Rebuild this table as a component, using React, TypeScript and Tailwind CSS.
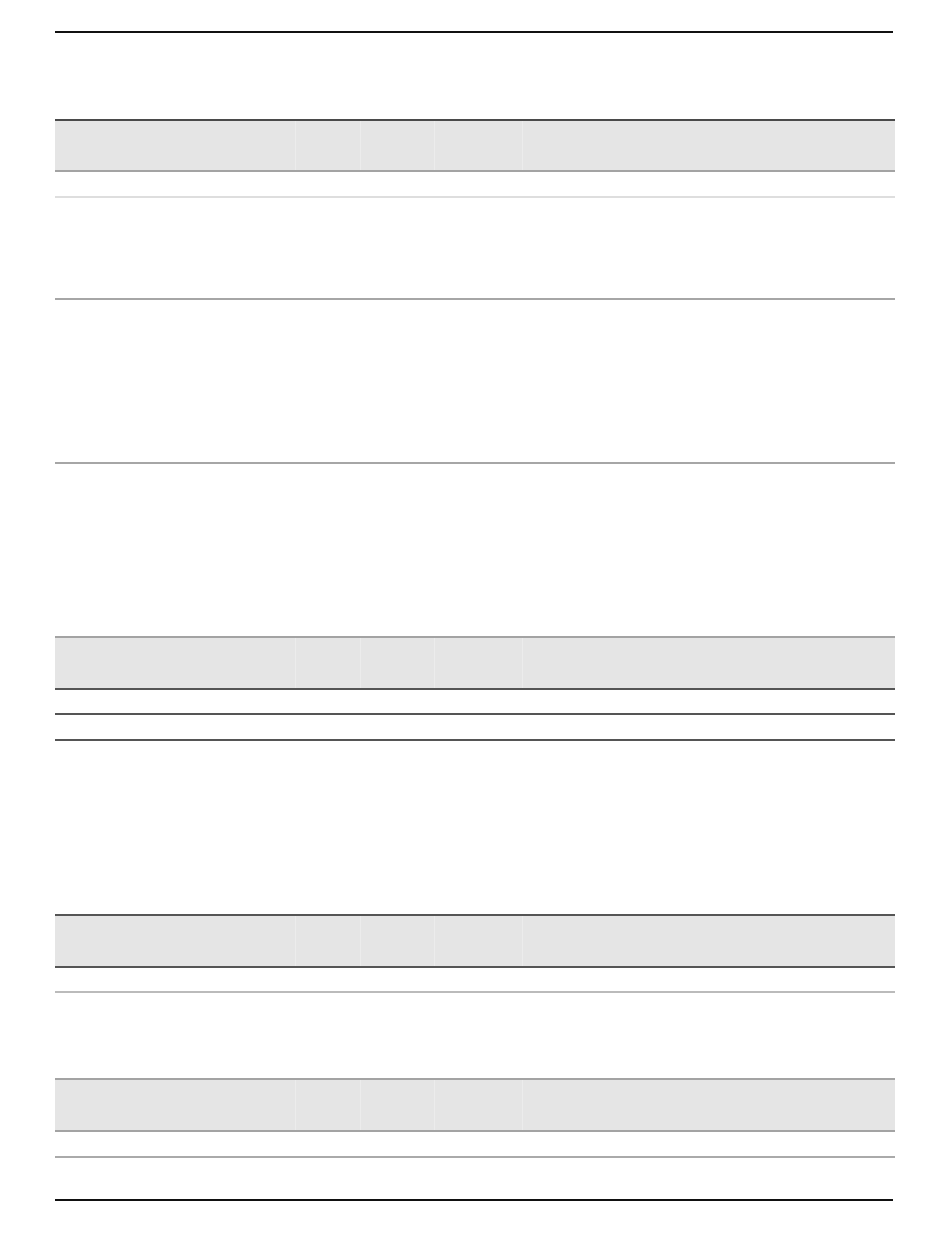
import { FC } from "react";

type Row = { h: string; line: string };

type TableProps = {
  mt: string;
  head: string;
  top: string;
  bottom: string;
  rows: Row[];
};

// empty header with column dividers, then blank body rows
const BlankTable: FC<TableProps> = ({ mt, head, top, bottom, rows }) => {
  return (
    <div className={`w-[840px] ${mt}`}>
      <div
        className={`grid grid-cols-[240px_65px_74px_88px_1fr] border-t-2 border-b-2 bg-[#e5e5e5] ${head} ${top} ${bottom}`}
      >
        <div />
        <div className="border-l border-[#ececec]" />
        <div className="border-l border-[#ececec]" />
        <div className="border-l border-[#ececec]" />
        <div className="border-l border-[#ececec]" />
      </div>
      {rows.map((r, i) => (
        <div key={i} className={`border-b-2 ${r.h} ${r.line}`} />
      ))}
    </div>
  );
};

export default function App() {
  return (
    <div className="min-h-[1260px] w-[950px] bg-white pl-[55px] pt-[31px] font-['Liberation_Sans',sans-serif]">
      <div className="h-[2px] w-[838px] bg-[#111111]" />

      <BlankTable
        mt="mt-[86px]"
        head="h-[53px]"
        top="border-t-[#4a4a4a]"
        bottom="border-b-[#a3a3a3]"
        rows={[
          { h: "h-[26px]", line: "border-[#dedede]" },
          { h: "h-[102px]", line: "border-[#a6a6a6]" },
          { h: "h-[164px]", line: "border-[#a6a6a6]" },
        ]}
      />

      <BlankTable
        mt="mt-[172px]"
        head="h-[54px]"
        top="border-t-[#a3a3a3]"
        bottom="border-b-[#555555]"
        rows={[
          { h: "h-[25px]", line: "border-[#555555]" },
          { h: "h-[26px]", line: "border-[#555555]" },
        ]}
      />

      <BlankTable
        mt="mt-[173px]"
        head="h-[54px]"
        top="border-t-[#555555]"
        bottom="border-b-[#555555]"
        rows={[{ h: "h-[25px]", line: "border-[#bbbbbb]" }]}
      />

      <BlankTable
        mt="mt-[85px]"
        head="h-[54px]"
        top="border-t-[#a3a3a3]"
        bottom="border-b-[#a3a3a3]"
        rows={[{ h: "h-[26px]", line: "border-[#aaaaaa]" }]}
      />

      <div className="mt-[41px] h-[2px] w-[838px] bg-[#111111]" />
    </div>
  );
}
